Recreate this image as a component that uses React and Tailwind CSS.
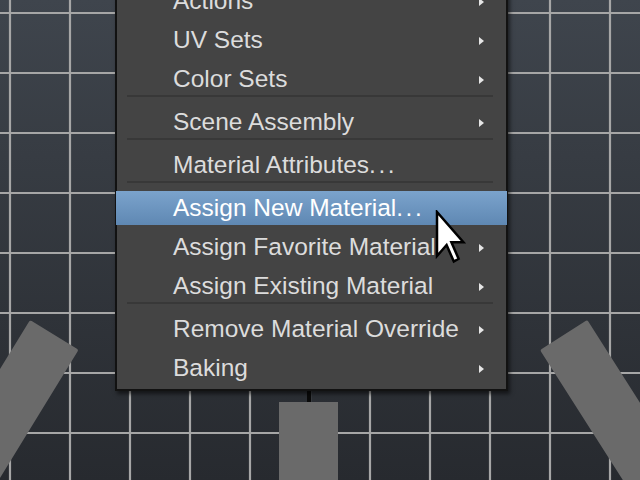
import React from 'react';

const items = [
  { label: 'Actions', arrow: true },
  { label: 'UV Sets', arrow: true },
  { label: 'Color Sets', arrow: true },
  { sep: true },
  { label: 'Scene Assembly', arrow: true },
  { sep: true },
  { label: 'Material Attributes', dots: true },
  { sep: true },
  { label: 'Assign New Material', dots: true, active: true },
  { label: 'Assign Favorite Material', arrow: true },
  { label: 'Assign Existing Material', arrow: true },
  { sep: true },
  { label: 'Remove Material Override', arrow: true },
  { label: 'Baking', arrow: true },
];

const gridX = [10, 70, 130, 190, 250, 310, 370, 430, 490, 550, 610];
const gridY = [13, 73, 133, 193, 253, 313, 373, 433];

function Grid() {
  return (
    <svg className="absolute inset-0" width="640" height="480">
      {gridX.map((x) => (
        <line key={'x' + x} x1={x} y1="0" x2={x} y2="480" stroke="#a6a6a6" strokeWidth="2.2" />
      ))}
      {gridY.map((y) => (
        <line key={'y' + y} x1="0" y1={y} x2="640" y2={y} stroke="#a6a6a6" strokeWidth="2.2" />
      ))}
    </svg>
  );
}

function MenuRow({ label, dots, arrow, active }) {
  return (
    <div className="relative h-[39px] flex items-center">
      {active && (
        <div className="absolute -left-px -right-px top-[2px] h-[34px] bg-linear-to-b from-[#7ba3cc] to-[#5f88b3]" />
      )}
      <span
        className={`relative pl-[56px] text-[24.5px] leading-none whitespace-nowrap ${
          active ? 'text-white' : 'text-[#dcdcdc]'
        }`}
      >
        {label}
        {dots && <span className="tracking-[2.5px]">...</span>}
      </span>
      {arrow && (
        <svg className="absolute right-[21px] top-1/2 -translate-y-1/2" width="7" height="10" viewBox="0 0 7 10">
          <path d="M1 1 L6 5 L1 9 Z" fill="#e6e6e6" />
        </svg>
      )}
    </div>
  );
}

function Cursor() {
  return (
    <svg className="absolute left-[435px] top-[210px]" width="32" height="56" viewBox="0 0 32 56">
      <polygon
        points="2,2 2,46 11.6,35 18.8,51.5 23.6,48.75 16.4,32.25 28.4,32.25"
        fill="#ffffff"
        stroke="#000000"
        strokeWidth="2.5"
        strokeLinejoin="miter"
      />
    </svg>
  );
}

export default function App() {
  return (
    <div
      className="relative w-[640px] h-[480px] overflow-hidden bg-linear-to-b from-[#3f454d] to-[#272a2f]"
      style={{ fontFamily: '"Liberation Sans", Arial, sans-serif' }}
    >
      <Grid />

      {/* viewport objects */}
      <div className="absolute left-[30px] top-[320px] w-[57px] h-[260px] origin-top-left rotate-[31.5deg] bg-[#6a6a6a] rounded-[2px]" />
      <div className="absolute left-[540px] top-[350px] w-[56px] h-[260px] origin-top-left -rotate-[32.5deg] bg-[#6a6a6a] rounded-[2px]" />
      <div className="absolute left-[279px] top-[402px] w-[59px] h-[90px] bg-[#6a6a6a]" />
      <div className="absolute left-[307px] top-[388px] w-[4px] h-[14px] bg-[#0a0a0a]" />

      {/* context menu */}
      <div className="absolute left-[115px] top-[-22px] w-[393px] border-2 border-[#121212] bg-[#444444] pt-[2px] pb-px shadow-[2px_3px_4px_rgba(0,0,0,0.55)]">
        {items.map((it, i) =>
          it.sep ? (
            <div key={i} className="h-[2px] mt-[-4px] mb-[6px] ml-[10px] mr-[13px] bg-[#383838]" />
          ) : (
            <MenuRow key={i} label={it.label} dots={it.dots} arrow={it.arrow} active={it.active} />
          )
        )}
      </div>

      <Cursor />
    </div>
  );
}
